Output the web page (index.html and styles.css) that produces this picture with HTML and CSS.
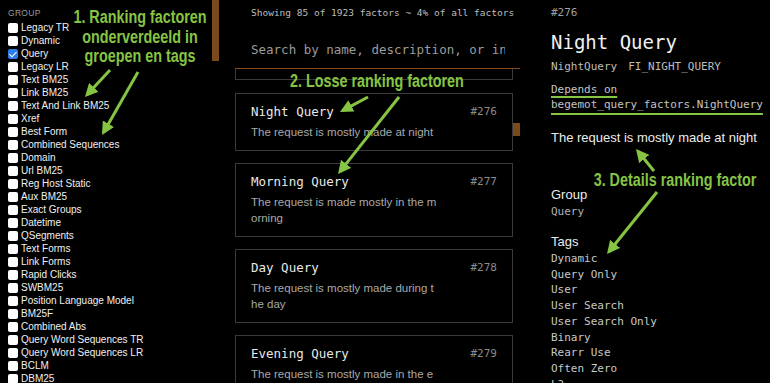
FILE: index.html
```html
<!DOCTYPE html>
<html lang="en">
<head>
  <meta charset="UTF-8">
  <meta name="viewport" content="width=device-width, initial-scale=1.0">
  <title>Ranking factors</title>
  <link rel="stylesheet" href="styles.css">
</head>
<body>
  <div class="app">
    <aside class="sidebar">
      <div class="group-list">
        <div class="group-title">GROUP</div>
        <label class="group-item"><input type="checkbox"><span>Legacy TR</span></label>
        <label class="group-item"><input type="checkbox"><span>Dynamic</span></label>
        <label class="group-item"><input type="checkbox" checked><span>Query</span></label>
        <label class="group-item"><input type="checkbox"><span>Legacy LR</span></label>
        <label class="group-item"><input type="checkbox"><span>Text BM25</span></label>
        <label class="group-item"><input type="checkbox"><span>Link BM25</span></label>
        <label class="group-item"><input type="checkbox"><span>Text And Link BM25</span></label>
        <label class="group-item"><input type="checkbox"><span>Xref</span></label>
        <label class="group-item"><input type="checkbox"><span>Best Form</span></label>
        <label class="group-item"><input type="checkbox"><span>Combined Sequences</span></label>
        <label class="group-item"><input type="checkbox"><span>Domain</span></label>
        <label class="group-item"><input type="checkbox"><span>Url BM25</span></label>
        <label class="group-item"><input type="checkbox"><span>Reg Host Static</span></label>
        <label class="group-item"><input type="checkbox"><span>Aux BM25</span></label>
        <label class="group-item"><input type="checkbox"><span>Exact Groups</span></label>
        <label class="group-item"><input type="checkbox"><span>Datetime</span></label>
        <label class="group-item"><input type="checkbox"><span>QSegments</span></label>
        <label class="group-item"><input type="checkbox"><span>Text Forms</span></label>
        <label class="group-item"><input type="checkbox"><span>Link Forms</span></label>
        <label class="group-item"><input type="checkbox"><span>Rapid Clicks</span></label>
        <label class="group-item"><input type="checkbox"><span>SWBM25</span></label>
        <label class="group-item"><input type="checkbox"><span>Position Language Model</span></label>
        <label class="group-item"><input type="checkbox"><span>BM25F</span></label>
        <label class="group-item"><input type="checkbox"><span>Combined Abs</span></label>
        <label class="group-item"><input type="checkbox"><span>Query Word Sequences TR</span></label>
        <label class="group-item"><input type="checkbox"><span>Query Word Sequences LR</span></label>
        <label class="group-item"><input type="checkbox"><span>BCLM</span></label>
        <label class="group-item"><input type="checkbox"><span>DBM25</span></label>
      </div>
      <div class="scrollbar"><div class="thumb thumb-side"></div></div>
    </aside>

    <main class="factors">
      <div class="factors-head">
        <div class="factors-count">Showing 85 of 1923 factors ~ 4% of all factors</div>
        <input class="search" type="text" placeholder="Search by name, description, or internal name">
      </div>
      <div class="factors-body">
        <div class="factor-list">
          <div class="factor-card is-cut"></div>
          <div class="factor-card">
            <div class="factor-top"><span class="factor-name">Night Query</span><span class="factor-id">#276</span></div>
            <p class="factor-desc">The request is mostly made at night</p>
          </div>
          <div class="factor-card">
            <div class="factor-top"><span class="factor-name">Morning Query</span><span class="factor-id">#277</span></div>
            <p class="factor-desc">The request is made mostly in the morning</p>
          </div>
          <div class="factor-card">
            <div class="factor-top"><span class="factor-name">Day Query</span><span class="factor-id">#278</span></div>
            <p class="factor-desc">The request is mostly made during the day</p>
          </div>
          <div class="factor-card">
            <div class="factor-top"><span class="factor-name">Evening Query</span><span class="factor-id">#279</span></div>
            <p class="factor-desc">The request is mostly made in the evening</p>
          </div>
        </div>
        <div class="scrollbar"><div class="thumb thumb-main"></div></div>
      </div>
    </main>

    <section class="detail">
      <div class="detail-id">#276</div>
      <h2 class="detail-title">Night Query</h2>
      <div class="detail-names"><span>NightQuery</span><span>FI_NIGHT_QUERY</span></div>
      <div class="depends">
        <div><span class="mark">Depends on</span></div>
        <div><span class="mark mark-low">begemot_query_factors.NightQuery</span></div>
      </div>
      <p class="detail-desc">The request is mostly made at night</p>
      <div class="detail-label">Group</div>
      <div class="detail-value">Query</div>
      <div class="detail-label detail-label-tags">Tags</div>
      <div class="tag-list">
        <div>Dynamic</div>
        <div>Query Only</div>
        <div>User</div>
        <div>User Search</div>
        <div>User Search Only</div>
        <div>Binary</div>
        <div>Rearr Use</div>
        <div>Often Zero</div>
        <div>L2</div>
      </div>
    </section>
  </div>

  <!-- annotations drawn over the screenshot -->
  <div class="note note-groups">1. Ranking factoren<br>onderverdeeld in<br>groepen en tags</div>
  <div class="note note-list">2. Losse ranking factoren</div>
  <div class="note note-detail">3. Details ranking factor</div>

  <svg class="arrows" width="770" height="383" viewBox="0 0 770 383">
    <defs>
      <marker id="head" markerWidth="13" markerHeight="13" refX="10" refY="6.5" orient="auto" markerUnits="userSpaceOnUse">
        <path d="M0,0 L13,6.5 L0,13 Z" fill="#86c443"/>
      </marker>
    </defs>
    <g stroke="#86c443" stroke-width="3" marker-end="url(#head)">
      <line x1="110" y1="70" x2="87" y2="94.8"/>
      <line x1="138" y1="72" x2="103.5" y2="132.4"/>
      <line x1="368" y1="97" x2="342.6" y2="110.6"/>
      <line x1="399" y1="97" x2="339.9" y2="171.6"/>
      <line x1="654" y1="171" x2="637.9" y2="151.3"/>
      <line x1="657" y1="192" x2="608.9" y2="251.7"/>
    </g>
  </svg>
</body>
</html>
```

FILE: styles.css
```css
/* General */
* {
  box-sizing: border-box;
}

body {
  margin: 0;
  width: 770px;
  height: 383px;
  overflow: hidden;
  position: relative;
  background: #000;
  color: #e6e6e6;
  font-family: "Liberation Sans", Arial, sans-serif;
}

.app {
  display: flex;
  height: 383px;
  overflow: hidden;
}

.scrollbar {
  width: 7px;
  flex: none;
}

.thumb {
  background: #7b4a1c;
}

/* Group sidebar */
.sidebar {
  width: 220px;
  flex: none;
  display: flex;
}

.group-list {
  width: 212px;
  padding: 6px 0 0 8px;
}

.group-title {
  font-size: 8.5px;
  line-height: 15px;
  color: #9a9a9a;
  letter-spacing: 0.3px;
}

.group-item {
  display: flex;
  align-items: center;
  gap: 3px;
  height: 13px;
  font-size: 10px;
  color: #f0f0f0;
  white-space: nowrap;
}

.group-item input {
  appearance: none;
  position: relative;
  flex: none;
  width: 10px;
  height: 10px;
  margin: 0;
  background: #fff;
  border-radius: 2px;
}

.group-item input:checked {
  background: #2b7de9;
}

.group-item input:checked::after {
  content: "";
  position: absolute;
  left: 3px;
  top: 1px;
  width: 3px;
  height: 6px;
  border: solid #fff;
  border-width: 0 1.5px 1.5px 0;
  transform: rotate(45deg);
}

.thumb-side {
  height: 61px;
}

/* Factor list */
.factors {
  width: 300px;
  flex: none;
  padding-left: 15px;
}

.factors-head {
  height: 69px;
  padding: 6px 0 0 16px;
  border-bottom: 1px solid #874a1c;
}

.factors-count {
  font-family: "DejaVu Sans Mono", monospace;
  font-size: 9.5px;
  line-height: 14px;
  color: #bdbdbd;
  white-space: nowrap;
}

.search {
  display: block;
  margin-top: 16px;
  width: 254px;
  height: 26px;
  padding: 0;
  border: 0;
  outline: none;
  background: transparent;
  font-family: "DejaVu Sans Mono", monospace;
  font-size: 12.5px;
  color: #ddd;
}

.search::placeholder {
  color: #9b9b9b;
}

.factors-body {
  display: flex;
}

.factor-list {
  width: 278px;
  display: flex;
  flex-direction: column;
  gap: 12px;
}

.factor-card {
  border: 1px solid #3a3a3a;
  padding: 9px 15px 10px;
}

.factor-card.is-cut {
  height: 11px;
  padding: 0;
  border-top: 0;
  margin-bottom: 1px;
}

.factor-top {
  display: flex;
  justify-content: space-between;
  align-items: center;
  height: 16px;
}

.factor-name {
  font-family: "DejaVu Sans Mono", monospace;
  font-size: 12.5px;
  color: #e8e8e8;
}

.factor-id {
  font-family: "DejaVu Sans Mono", monospace;
  font-size: 11px;
  color: #8c8c8c;
}

.factor-desc {
  margin: 5px 0 0;
  max-width: 186.5px;
  word-break: break-all;
  font-size: 11.5px;
  line-height: 16px;
  color: #a9a9a9;
}

.thumb-main {
  height: 13px;
  margin-top: 54px;
}

/* Detail panel */
.detail {
  flex: 1;
  padding: 6px 0 0 31px;
  font-family: "DejaVu Sans Mono", monospace;
  font-size: 11px;
  color: #bdbdbd;
}

.detail-id {
  line-height: 14px;
  color: #a0a0a0;
}

.detail-title {
  margin: 10px 0 0;
  font-size: 19px;
  line-height: 24px;
  font-weight: normal;
  color: #f0f0f0;
}

.detail-names {
  display: flex;
  gap: 11px;
  margin-top: 6px;
  line-height: 14px;
}

.depends {
  margin-top: 8px;
  line-height: 15px;
  color: #c4c4c4;
}

.mark {
  text-decoration: underline;
  text-decoration-color: #86c443;
  text-decoration-thickness: 2px;
  text-underline-offset: 3px;
}

.mark-low {
  text-underline-offset: 5px;
}

.detail-desc {
  margin: 18px 0 0;
  font-family: "Liberation Sans", Arial, sans-serif;
  font-size: 13px;
  line-height: 16px;
  color: #ececec;
}

.detail-label {
  margin-top: 41px;
  font-family: "Liberation Sans", Arial, sans-serif;
  font-size: 13px;
  line-height: 16px;
  color: #ececec;
}

.detail-label-tags {
  margin-top: 15px;
}

.detail-value {
  margin-top: 1px;
  line-height: 15px;
  color: #b0b0b0;
}

.tag-list {
  margin-top: 1px;
  line-height: 15.7px;
  color: #c8c8c8;
}

/* Annotations */
.note {
  position: absolute;
  width: 200px;
  font-size: 17.5px;
  line-height: 19.5px;
  font-weight: bold;
  color: #86c443;
  text-align: center;
  white-space: nowrap;
  transform: scaleX(0.82);
}

.note-groups {
  left: 40px;
  top: 8px;
}

.note-list {
  left: 272px;
  top: 72px;
}

.note-detail {
  left: 575px;
  top: 171px;
}

.arrows {
  position: absolute;
  left: 0;
  top: 0;
  pointer-events: none;
}
```
